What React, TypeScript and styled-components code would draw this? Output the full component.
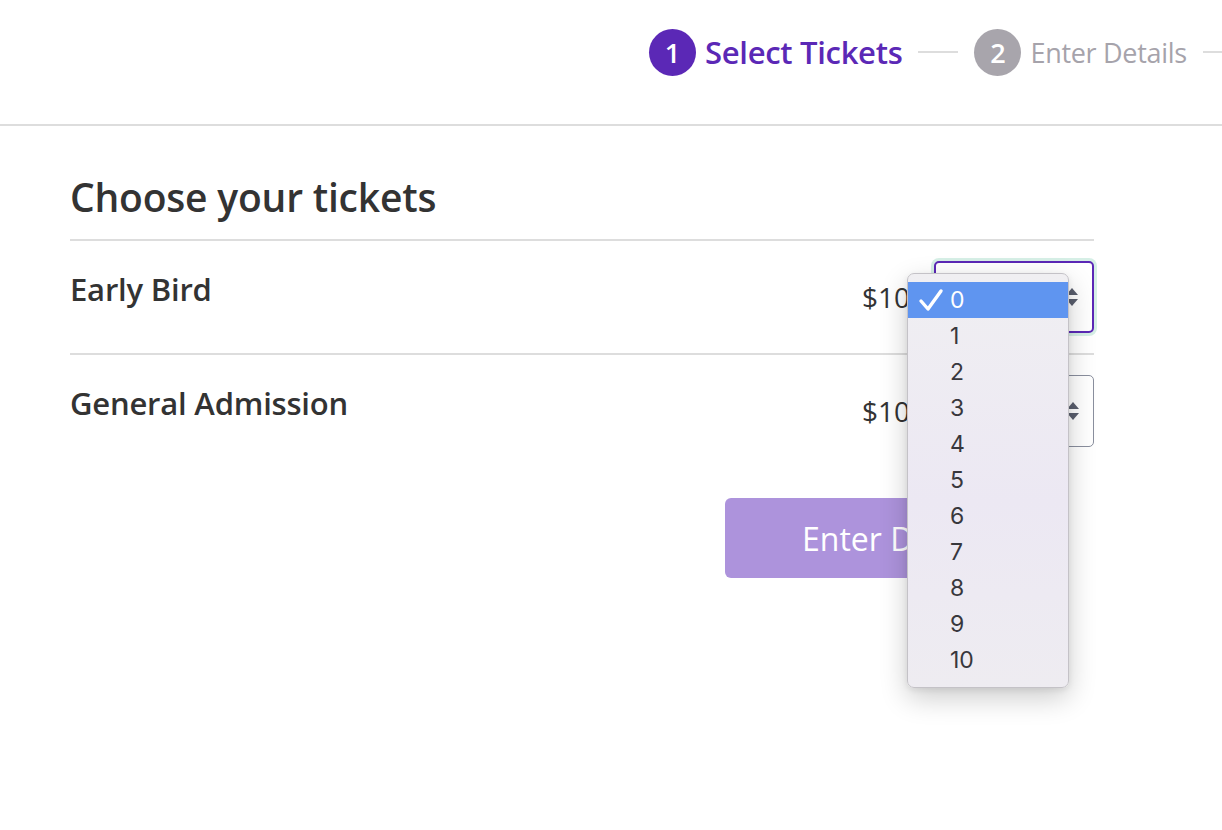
import React, { useState } from 'react'
import styled, { createGlobalStyle } from 'styled-components'

const GlobalStyle = createGlobalStyle`
  body {
    margin: 0;
    background: #fff;
    font-family: 'Open Sans', 'Noto Sans', sans-serif;
    color: #333;
  }
`

const tickets = [
  { id: 'early', name: 'Early Bird', price: '$10' },
  { id: 'general', name: 'General Admission', price: '$10' },
]

const options = Array.from({ length: 11 }, (_, i) => i)

const App: React.FC = () => {
  const [open] = useState(true)

  return (
    <Page>
      <GlobalStyle />
      <Header>
        <Stepper>
          <Step>
            <StepNumber active>1</StepNumber>
            <StepLabel active>Select Tickets</StepLabel>
          </Step>
          <StepLine />
          <Step>
            <StepNumber>2</StepNumber>
            <StepLabel>Enter Details</StepLabel>
          </Step>
          <StepLine />
        </Stepper>
      </Header>

      <Main>
        <Title>Choose your tickets</Title>
        {tickets.map((t, i) => (
          <TicketRow key={t.id}>
            <TicketName>{t.name}</TicketName>
            <PriceArea>
              <Price>{t.price}</Price>
              <SelectWrap>
                <SelectBox focused={i === 0}>
                  <SelectValue>0</SelectValue>
                  <Arrows viewBox="0 0 14 22">
                    <path d="M7 2 L13 9 L1 9 Z" />
                    <path d="M1 13 L13 13 L7 20 Z" />
                  </Arrows>
                </SelectBox>
                {i === 0 && open && (
                  <Menu>
                    {options.map(n => (
                      <MenuItem key={n} selected={n === 0}>
                        <Check>
                          {n === 0 && (
                            <svg width="26" height="24" viewBox="0 0 26 24">
                              <path
                                d="M3 13 L10 21 L23 3"
                                fill="none"
                                stroke="#fff"
                                strokeWidth="3.4"
                                strokeLinecap="round"
                                strokeLinejoin="round"
                              />
                            </svg>
                          )}
                        </Check>
                        {n}
                      </MenuItem>
                    ))}
                  </Menu>
                )}
              </SelectWrap>
            </PriceArea>
          </TicketRow>
        ))}
        <Actions>
          <SubmitButton disabled>Enter Details</SubmitButton>
        </Actions>
      </Main>
    </Page>
  )
}

const Page = styled.div`
  width: 1222px;
  min-height: 830px;
  overflow: hidden;
`

const Header = styled.header`
  height: 124px;
  border-bottom: 2px solid #dddddd;
  display: flex;
  align-items: center;
  padding-left: 649px;
  overflow: hidden;
  white-space: nowrap;
`

const Stepper = styled.div`
  display: flex;
  align-items: center;
  margin-top: -20px;
`

const Step = styled.div`
  display: flex;
  align-items: center;
  gap: 9px;
`

const StepNumber = styled.span<{ active?: boolean }>`
  width: 47px;
  height: 47px;
  border-radius: 50%;
  background: ${p => (p.active ? '#5b28b6' : '#a8a5ac')};
  color: #fff;
  font-size: 27px;
  font-weight: 600;
  display: flex;
  align-items: center;
  justify-content: center;
`

const StepLabel = styled.span<{ active?: boolean }>`
  font-size: ${p => (p.active ? '31px' : '27px')};
  font-weight: ${p => (p.active ? 600 : 400)};
  color: ${p => (p.active ? '#5b28b6' : '#a6a3ab')};
  letter-spacing: -0.3px;
`

const StepLine = styled.span`
  width: 40px;
  height: 2px;
  background: #dddddd;
  margin: 0 16px;
  flex-shrink: 0;
`

const Main = styled.main`
  width: 1024px;
  margin-left: 70px;
  padding-top: 46px;
`

const Title = styled.h1`
  margin: 0 0 18px;
  font-size: 39px;
  font-weight: 600;
  color: #333;
  line-height: 49px;
  letter-spacing: -0.2px;
`

const TicketRow = styled.div`
  display: flex;
  justify-content: space-between;
  align-items: flex-start;
  border-top: 2px solid #dddddd;
  padding: 20px 0;
  &:last-of-type {
    border-bottom: 2px solid #dddddd;
  }
`

const TicketName = styled.div`
  font-size: 31px;
  font-weight: 600;
  line-height: 38px;
  padding-top: 9px;
  color: #333;
  letter-spacing: -0.2px;
`

const PriceArea = styled.div`
  display: flex;
  align-items: center;
  height: 72px;
`

const Price = styled.span`
  font-size: 28px;
  color: #333;
  margin-right: 24px;
`

const SelectWrap = styled.div`
  position: relative;
`

const SelectBox = styled.div<{ focused?: boolean }>`
  box-sizing: border-box;
  width: 160px;
  height: 72px;
  border-radius: 5px;
  border: ${p => (p.focused ? '2px solid #5b28b6' : '1.5px solid #8a8f9e')};
  box-shadow: ${p => (p.focused ? '0 0 0 3px #d6efe6' : 'none')};
  display: flex;
  align-items: center;
  justify-content: space-between;
  padding: 0 13px 0 18px;
  background: #fff;
`

const SelectValue = styled.span`
  font-size: 24px;
  color: #333;
`

const Arrows = styled.svg`
  width: 14px;
  height: 22px;
  fill: #5a5f6e;
`

const Menu = styled.div`
  position: absolute;
  left: -27px;
  top: 12px;
  width: 162px;
  box-sizing: border-box;
  padding: 8px 0 9px;
  border: 1px solid #c4c2c7;
  border-radius: 7px;
  background: linear-gradient(180deg, #f0eff2 0%, #ece8f3 55%, #eeecf1 100%);
  box-shadow: 0 10px 28px rgba(0, 0, 0, 0.2), 0 2px 6px rgba(0, 0, 0, 0.08);
  font-family: Inter, 'Noto Sans', sans-serif;
  z-index: 10;
`

const MenuItem = styled.div<{ selected?: boolean }>`
  height: 36px;
  display: flex;
  align-items: center;
  padding-left: 10px;
  font-size: 23px;
  color: ${p => (p.selected ? '#fff' : '#38373c')};
  background: ${p => (p.selected ? '#5f95f0' : 'transparent')};
`

const Check = styled.span`
  width: 32px;
  display: flex;
  align-items: center;
`

const Actions = styled.div`
  display: flex;
  justify-content: flex-end;
  padding-top: 31px;
  padding-right: 25px;
`

const SubmitButton = styled.button`
  width: 344px;
  height: 80px;
  border: none;
  border-radius: 6px;
  background: #ad93dc;
  color: #fff;
  font-family: 'Open Sans', 'Noto Sans', sans-serif;
  font-size: 32px;
  font-weight: 400;
  cursor: default;
`

export default App
